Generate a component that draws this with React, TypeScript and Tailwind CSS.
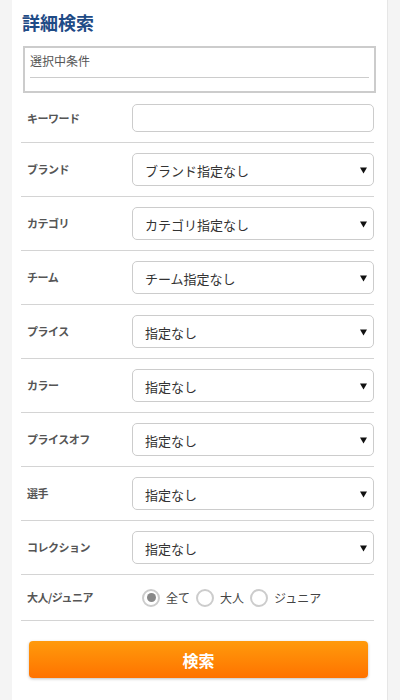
const FONT = {
  fontFamily: '"Noto Sans CJK JP", "Noto Sans", "Liberation Sans", sans-serif',
};

const SELECTS = [
  { label: "ブランド", value: "ブランド指定なし" },
  { label: "カテゴリ", value: "カテゴリ指定なし" },
  { label: "チーム", value: "チーム指定なし" },
  { label: "プライス", value: "指定なし" },
  { label: "カラー", value: "指定なし" },
  { label: "プライスオフ", value: "指定なし" },
  { label: "選手", value: "指定なし" },
  { label: "コレクション", value: "指定なし" },
];

const RADIOS = ["全て", "大人", "ジュニア"];

function Label({ children }: { children: React.ReactNode }) {
  return (
    <div className="w-[111px] shrink-0 pl-[6px] text-[11px] font-bold tracking-[-0.5px] text-[#555]">
      {children}
    </div>
  );
}

export default function App() {
  return (
    <div style={FONT} className="min-h-[700px] w-[400px] bg-[#f4f4f4]">
      <div className="mx-[12px] min-h-[700px] border-r border-[#e6e6e6] bg-white pr-[13px] pl-[9px] pt-[8px]">
        {/* Title */}
        <h1 className="pl-[1px] text-[18px] font-semibold leading-[28px] text-[#1f4b86]">
          詳細検索
        </h1>

        {/* Selected conditions */}
        <div className="mt-[10px] mr-[-2px] ml-[2px] h-[47px] border-2 border-[#cccccc] px-[5px] pt-[5px]">
          <div className="border-b border-[#cccccc] pb-[8px] text-[12px] leading-[16px] text-[#555]">
            選択中条件
          </div>
        </div>

        {/* Keyword */}
        <div className="flex items-center border-b border-[#d4d4d4] pt-[11px] pb-[10px]">
          <Label>キーワード</Label>
          <input
            type="text"
            className="h-[28px] flex-1 rounded-[5px] border border-[#cccccc] bg-white px-2 text-[13px] outline-none"
          />
        </div>

        {/* Selects */}
        {SELECTS.map((s) => (
          <div
            key={s.label}
            className="flex items-center border-b border-[#d4d4d4] py-[10px]"
          >
            <Label>{s.label}</Label>
            <div className="flex h-[33px] flex-1 items-center justify-between rounded-[5px] border border-[#cccccc] bg-white pr-[6px] pl-[12px]">
              <span className="pt-[3px] text-[13px] text-[#333]">{s.value}</span>
              <svg width="7" height="7" viewBox="0 0 7 7" className="mt-[1px]">
                <path d="M0 0.5 H7 L3.5 6.5 Z" fill="#111" />
              </svg>
            </div>
          </div>
        ))}

        {/* Adult / Junior */}
        <div className="flex h-[46px] items-center border-b border-[#d4d4d4]">
          <Label>大人/ジュニア</Label>
          <div className="flex items-center pl-[10px] text-[12px] text-[#444]">
            {RADIOS.map((r, i) => (
              <label key={r} className="mr-[6px] flex items-center">
                <span className="flex h-[18px] w-[18px] items-center justify-center rounded-full border-2 border-[#cccccc] bg-white">
                  {i === 0 && (
                    <span className="h-[9px] w-[9px] rounded-full bg-[#888]" />
                  )}
                </span>
                <span className="ml-[6px]">{r}</span>
              </label>
            ))}
          </div>
        </div>

        {/* Search button */}
        <div className="pt-[20px] pr-[6px] pl-[8px]">
          <button className="h-[37px] w-full rounded-[4px] bg-gradient-to-b from-[#ff9a0c] to-[#ff7200] text-[16px] font-bold text-white shadow-[0_1px_3px_rgba(0,0,0,0.25)]">
            検索
          </button>
        </div>
      </div>
    </div>
  );
}
